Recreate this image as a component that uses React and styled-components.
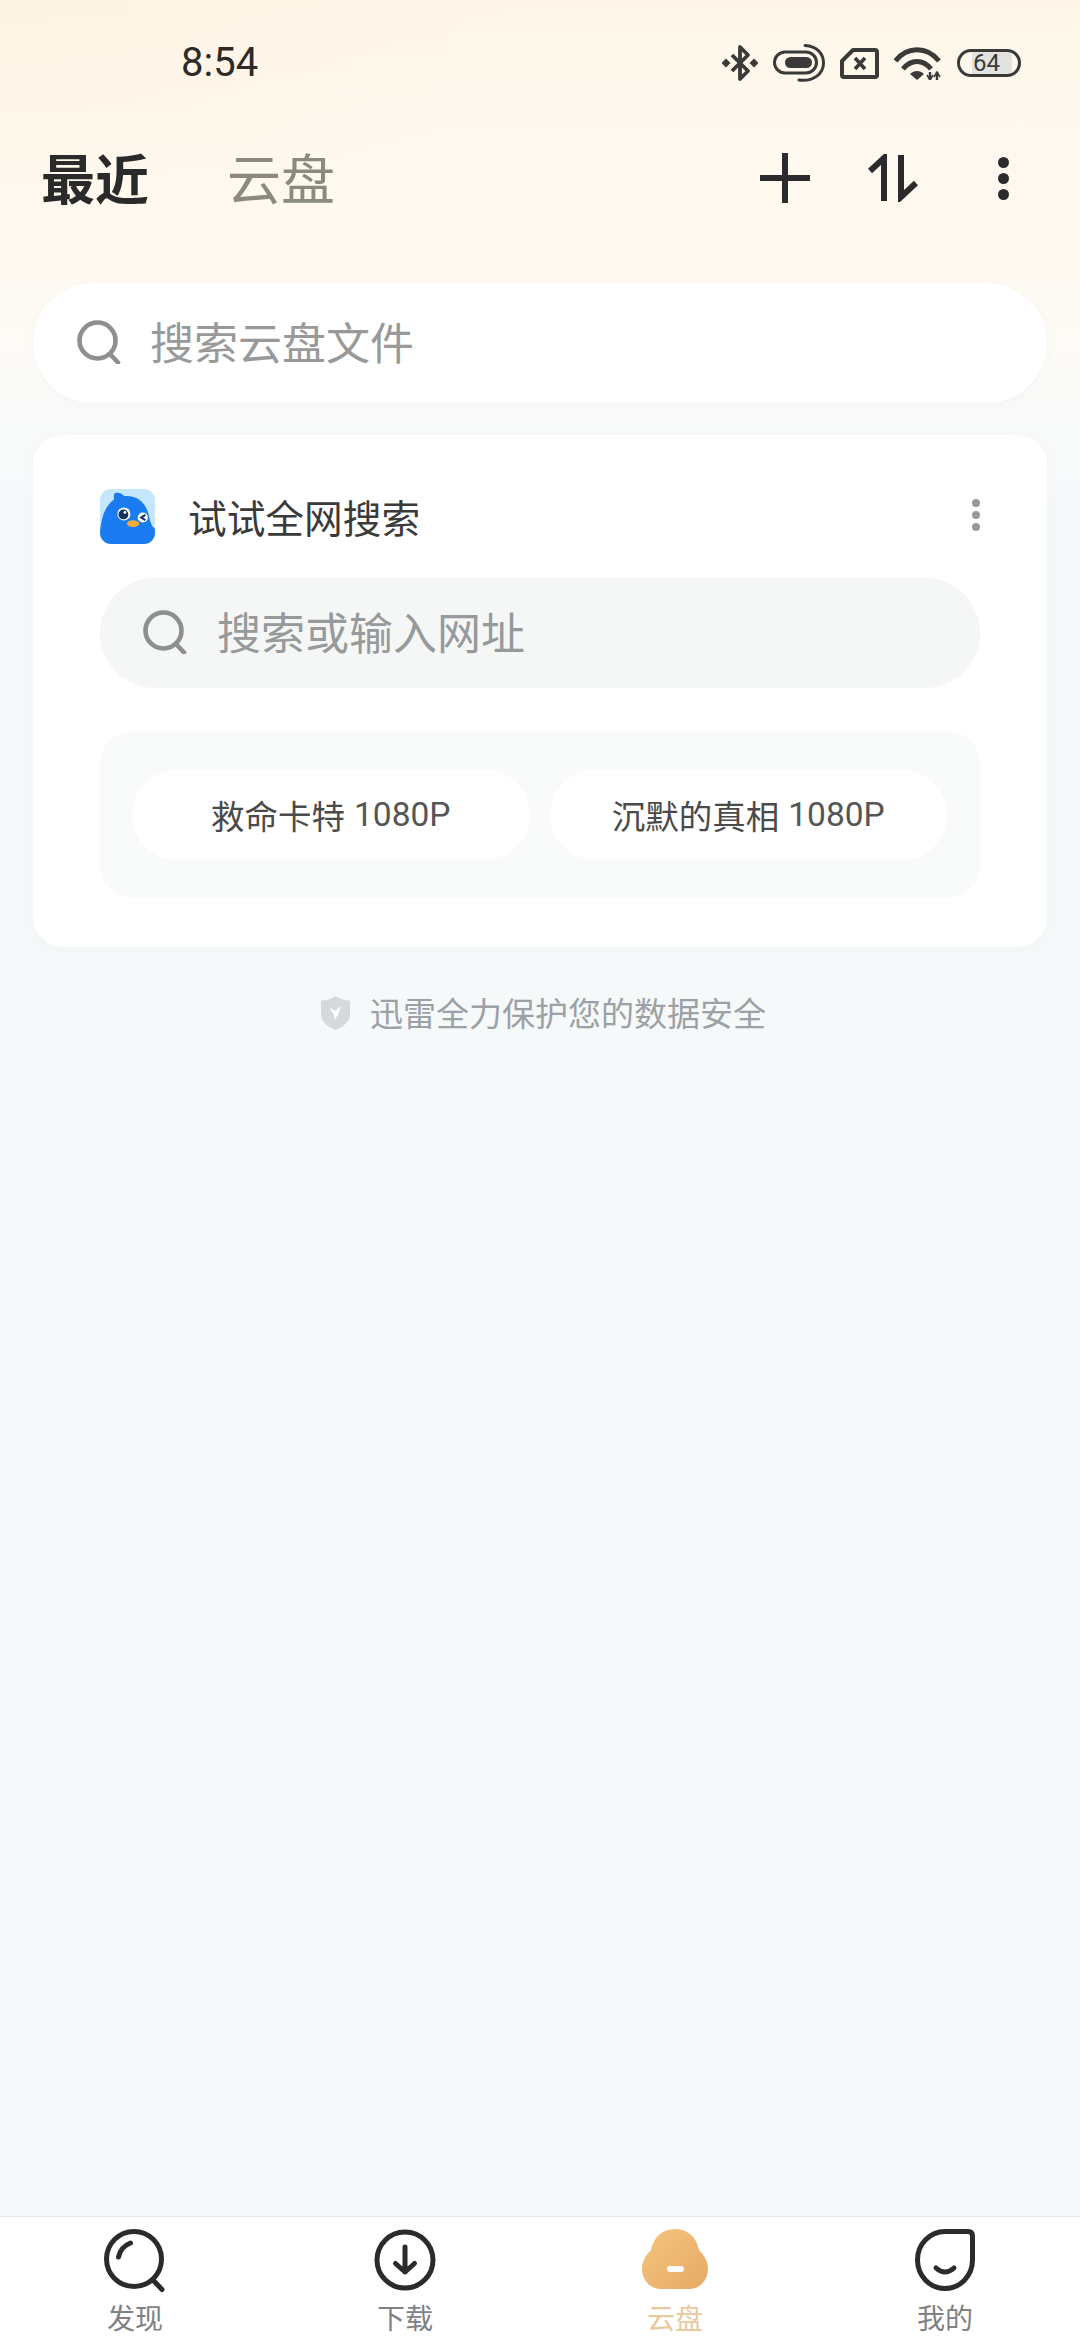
import React from 'react';
import styled, { createGlobalStyle } from 'styled-components';

const GlobalStyle = createGlobalStyle`
  html, body {
    margin: 0;
    padding: 0;
    background: #f6f9fa;
  }
  * {
    box-sizing: border-box;
  }
`;

const Page = styled.div`
  width: 1080px;
  height: 2340px;
  display: flex;
  flex-direction: column;
  overflow: hidden;
  font-family: "Noto Sans CJK SC", "Roboto", sans-serif;
  background:
    radial-gradient(ellipse 520px 240px at 0 0, rgba(253, 238, 214, 0.3), rgba(253, 238, 214, 0)),
    linear-gradient(180deg, #fef6e9 0, #fef8ee 130px, #fffaf1 260px, #fdfbf6 340px, #f9fafa 420px, #f6f9fa 510px);
`;

const StatusBar = styled.div`
  height: 124px;
  flex-shrink: 0;
  display: flex;
  align-items: center;
  justify-content: space-between;
  padding: 2px 59px 0 181px;
`;

const Time = styled.span`
  font-family: "Roboto", sans-serif;
  font-size: 40px;
  font-weight: 400;
  line-height: 1;
  color: #2e2a25;
`;

const StatusIcons = styled.div`
  display: flex;
  align-items: center;
  gap: 15px;
`;

const BatteryPill = styled.div`
  width: 64px;
  height: 28px;
  border: 3px solid #3a3a38;
  border-radius: 14px;
  display: flex;
  align-items: center;
  padding-left: 13px;
  font-family: "Roboto", sans-serif;
  font-size: 24px;
  line-height: 1;
  color: #3a3a38;
  background: linear-gradient(90deg, transparent 20%, #e2e2df 20%, #e2e2df 90%, transparent 90%);
`;

const TabRow = styled.div`
  height: 108px;
  flex-shrink: 0;
  display: flex;
  align-items: center;
  justify-content: space-between;
  padding: 0 42px 0 41px;
`;

const Tabs = styled.div`
  display: flex;
  align-items: center;
  gap: 78px;
  padding-bottom: 3px;
`;

const Tab = styled.span`
  font-size: 54px;
  line-height: 1;
  font-weight: ${(p) => (p.$active ? 700 : 400)};
  color: ${(p) => (p.$active ? '#2a2a2a' : '#8a8a80')};
`;

const Actions = styled.div`
  display: flex;
  align-items: center;
  gap: 58px;
  margin-right: 29px;
`;

const Main = styled.main`
  flex: 1;
  display: flex;
  flex-direction: column;
  padding: 51px 33px 0;
`;

const SearchBar = styled.div`
  height: 120px;
  display: flex;
  align-items: center;
  gap: 29px;
  padding-left: 44px;
  border-radius: 60px;
  background: #fff;
  box-shadow: 0 2px 14px rgba(120, 110, 90, 0.04);
  font-size: 44px;
  line-height: 1;
  color: #999;
`;

const Placeholder = styled.span`
  padding-bottom: 5px;
`;

const Card = styled.section`
  margin-top: 32px;
  height: 512px;
  padding: 54px 67px 0;
  border-radius: 30px;
  background: #fff;
  box-shadow: 0 2px 14px rgba(120, 130, 140, 0.04);
`;

const CardHead = styled.div`
  height: 55px;
  display: flex;
  align-items: center;
  justify-content: space-between;
`;

const CardTitle = styled.div`
  display: flex;
  align-items: center;
  gap: 33px;
  font-size: 38.7px;
  line-height: 1;
  color: #3a3a3a;
`;

const InnerSearch = styled.div`
  margin-top: 34px;
  height: 110px;
  display: flex;
  align-items: center;
  gap: 30px;
  padding-left: 43px;
  border-radius: 55px;
  background: #f5f7f7;
  font-size: 44px;
  line-height: 1;
  color: #969a9a;
`;

const ChipsBox = styled.div`
  margin-top: 44px;
  height: 165px;
  display: flex;
  align-items: center;
  gap: 20px;
  padding: 0 33px 0 32px;
  border-radius: 30px;
  background: #f9fbfb;
`;

const Chip = styled.div`
  flex: 1;
  height: 90px;
  display: flex;
  align-items: center;
  justify-content: center;
  border-radius: 45px;
  background: #fff;
  font-size: 33.5px;
  line-height: 1;
  color: #4a4a4a;

  b {
    font-family: "Roboto", sans-serif;
    font-weight: 400;
    margin-left: 9px;
    color: #555;
  }
`;

const SafeNote = styled.div`
  margin-top: 46px;
  padding-left: 7px;
  display: flex;
  align-items: center;
  justify-content: center;
  gap: 20px;
  font-size: 33px;
  line-height: 34px;
  color: #9ca1a5;

  svg {
    margin-top: 3px;
  }
`;

const BottomNav = styled.nav`
  height: 124px;
  flex-shrink: 0;
  display: grid;
  grid-template-columns: repeat(4, 270px);
  border-top: 1px solid #e6e8e9;
  background: #fff;
`;

const NavItem = styled.div`
  display: flex;
  flex-direction: column;
  align-items: center;
  padding-top: 10px;
  font-size: 28px;
  line-height: 30px;
  color: ${(p) => (p.$active ? '#e9c99d' : '#7f8184')};

  svg {
    margin-bottom: 9px;
  }
`;

const Dots = styled.div`
  display: flex;
  flex-direction: column;
  gap: ${(p) => p.$gap}px;
  margin-left: ${(p) => p.$indent || 0}px;
  margin-bottom: ${(p) => p.$lift || 0}px;

  i {
    display: block;
    width: ${(p) => p.$size}px;
    height: ${(p) => p.$size}px;
    border-radius: 50%;
    background: ${(p) => p.$color};
  }
`;

const SearchSvg = styled.svg`
  margin-bottom: 3px;
`;

const ink = '#2b2b2d';

const Bluetooth = () => (
  <svg width="36" height="38" viewBox="0 0 36 38" fill="none" stroke="#3a3a38" strokeWidth="3.8">
    <path d="M10 11 26 27 18 35V3l8 8L10 27" strokeLinejoin="round" />
    <path d="M4 14.500l4.500 4.500-4.500 4.500L-.5 19zM32 14.500l4.500 4.500-4.500 4.500L27.500 19z" fill="#3a3a38" stroke="none" />
  </svg>
);

const Charging = () => (
  <svg width="52" height="38" viewBox="0 0 52 38" fill="none" stroke="#3a3a38" strokeWidth="3">
    <rect x="1.500" y="8" width="42" height="21" rx="10.500" />
    <rect x="12" y="13" width="27" height="11" rx="5.500" fill="#3a3a38" stroke="none" />
    <path d="M32 1.500C44 2 50.500 10 50.500 19 50.500 30 40 38 26 36" strokeLinecap="round" />
  </svg>
);

const NoSim = () => (
  <svg width="39" height="31" viewBox="0 0 39 31" fill="none" stroke="#3a3a38" strokeWidth="4">
    <path d="M13 2H35a2 2 0 0 1 2 2V27a2 2 0 0 1-2 2H4a2 2 0 0 1-2-2V13Z" strokeLinejoin="round" />
    <path d="M15 10 25 21M25 10 15 21" strokeWidth="3.6" />
  </svg>
);

const Wifi = () => (
  <svg width="48" height="33" viewBox="0 0 48 33" fill="none" stroke="#3a3a38" strokeWidth="5">
    <path d="M1.500 14C13-1 33-1 45 14" />
    <path d="M9 22C17 12 29 12 37 22" />
    <path d="M16 27C20 23 26 23 30 27L23 33Z" fill="#3a3a38" stroke="none" />
    <path d="M36 25V33M43 25V33" strokeWidth="2.400" />
    <path d="M33 28l3 5 3-5M40 30l3-5 3 5" strokeWidth="1.600" />
  </svg>
);

const Plus = () => (
  <svg width="50" height="50" viewBox="0 0 50 50" stroke={ink} strokeWidth="6">
    <path d="M25 0V50M0 25H50" />
  </svg>
);

const SortArrows = () => (
  <svg width="50" height="48" viewBox="0 0 50 48" fill="none" stroke={ink} strokeWidth="6">
    <path d="M2 17 16 4V47" strokeLinejoin="miter" />
    <path d="M33 1V43L48 29" strokeLinejoin="miter" />
  </svg>
);

const MoreDots = ({ size, gap, color, indent, lift }) => (
  <Dots $size={size} $gap={gap} $color={color} $indent={indent} $lift={lift}>
    <i />
    <i />
    <i />
  </Dots>
);

const SearchIcon = () => (
  <SearchSvg width="44" height="44" viewBox="0 0 44 44" fill="none" stroke="#8e8f8f" strokeWidth="4.600" strokeLinecap="round">
    <circle cx="20.500" cy="20.500" r="18" />
    <path d="M33 34 41 42.500" />
  </SearchSvg>
);

const BirdLogo = () => (
  <svg width="55" height="55" viewBox="0 0 54 54">
    <rect width="54" height="54" rx="11" fill="#c6e6fb" />
    <path
      d="M0 43C1 32 3 18 14 10 13 7 14 4 15 4 18 3 21 4 24 7 36 6 45 13 48 26 49 32 51 37 54 39V43A11 11 0 0 1 43 54H11A11 11 0 0 1 0 43Z"
      fill="#1a7cf0"
    />
    <circle cx="23.500" cy="24.500" r="6.400" fill="#fff" />
    <circle cx="23" cy="25" r="4.800" fill="#12315e" />
    <circle cx="24.500" cy="23" r="1.400" fill="#fff" />
    <circle cx="42" cy="28" r="5" fill="#fff" />
    <path d="M44.500 25.500 40.500 28 44.500 30.500" fill="none" stroke="#12315e" strokeWidth="2" />
    <ellipse cx="32.500" cy="34" rx="6" ry="3.200" fill="#f1ab3c" />
  </svg>
);

const Shield = () => (
  <svg width="29" height="34" viewBox="0 0 29 34">
    <path d="M14.500 0C19 3 24 4.500 29 4.500V18C29 26 22 31 14.500 34 7 31 0 26 0 18V4.500C5 4.500 10 3 14.500 0Z" fill="#d5d9dc" />
    <path d="M8 11 14 15 20 10 17 19 13 24 13 19Z" fill="#fff" />
  </svg>
);

const NavDiscover = () => (
  <svg width="66" height="66" viewBox="0 0 66 66" fill="none" stroke={ink} strokeWidth="5" strokeLinecap="round">
    <circle cx="32" cy="32" r="27.500" />
    <path d="M51 53 60 62.500" />
    <path d="M16.500 30C18 23 22 18.500 28.500 16" />
  </svg>
);

const NavDownload = () => (
  <svg width="68" height="66" viewBox="0 0 68 66" fill="none" stroke={ink} strokeWidth="5" strokeLinecap="round" strokeLinejoin="round">
    <circle cx="34" cy="33" r="28" />
    <path d="M34 20V45M24.500 36.500 34 45 43.500 36.500" />
  </svg>
);

const NavCloud = () => (
  <svg width="66" height="66" viewBox="0 0 66 66">
    <defs>
      <linearGradient id="cloudFill" x1="0" y1="0" x2="1" y2="1">
        <stop offset="0" stopColor="#f5c57f" />
        <stop offset="1" stopColor="#e5a965" />
      </linearGradient>
    </defs>
    <path
      d="M33 2C46 2 55 11 57 23 62 28 66 34 66 42 66 53 58 62 47 62H19C8 62 0 53 0 42 0 34 4 28 9 23 11 11 20 2 33 2Z"
      fill="url(#cloudFill)"
    />
    <rect x="25" y="39" width="17" height="6" rx="3" fill="#fff" />
  </svg>
);

const NavMine = () => (
  <svg width="68" height="66" viewBox="0 0 68 66" fill="none" stroke={ink} strokeWidth="5" strokeLinecap="round">
    <path d="M34 4.500H57Q61.500 4.500 61.500 9V33A27.500 28.500 0 1 1 34 4.500Z" />
    <path d="M25 41Q34 49 43 41" />
  </svg>
);

const App = () => {
  return (
    <Page>
      <GlobalStyle />
      <StatusBar>
        <Time>8:54</Time>
        <StatusIcons>
          <Bluetooth />
          <Charging />
          <NoSim />
          <Wifi />
          <BatteryPill>64</BatteryPill>
        </StatusIcons>
      </StatusBar>

      <TabRow>
        <Tabs>
          <Tab $active>最近</Tab>
          <Tab>云盘</Tab>
        </Tabs>
        <Actions>
          <Plus />
          <SortArrows />
          <MoreDots size={11} gap={5} color={ink} indent={22} />
        </Actions>
      </TabRow>

      <Main>
        <SearchBar>
          <SearchIcon />
          <Placeholder>搜索云盘文件</Placeholder>
        </SearchBar>

        <Card>
          <CardHead>
            <CardTitle>
              <BirdLogo />
              试试全网搜索
            </CardTitle>
            <MoreDots size={8} gap={4} color="#999" lift={3} />
          </CardHead>
          <InnerSearch>
            <SearchIcon />
            <Placeholder>搜索或输入网址</Placeholder>
          </InnerSearch>
          <ChipsBox>
            <Chip>救命卡特<b>1080P</b></Chip>
            <Chip>沉默的真相<b>1080P</b></Chip>
          </ChipsBox>
        </Card>

        <SafeNote>
          <Shield />
          迅雷全力保护您的数据安全
        </SafeNote>
      </Main>

      <BottomNav>
        <NavItem>
          <NavDiscover />
          发现
        </NavItem>
        <NavItem>
          <NavDownload />
          下载
        </NavItem>
        <NavItem $active>
          <NavCloud />
          云盘
        </NavItem>
        <NavItem>
          <NavMine />
          我的
        </NavItem>
      </BottomNav>
    </Page>
  );
};

export default App;
